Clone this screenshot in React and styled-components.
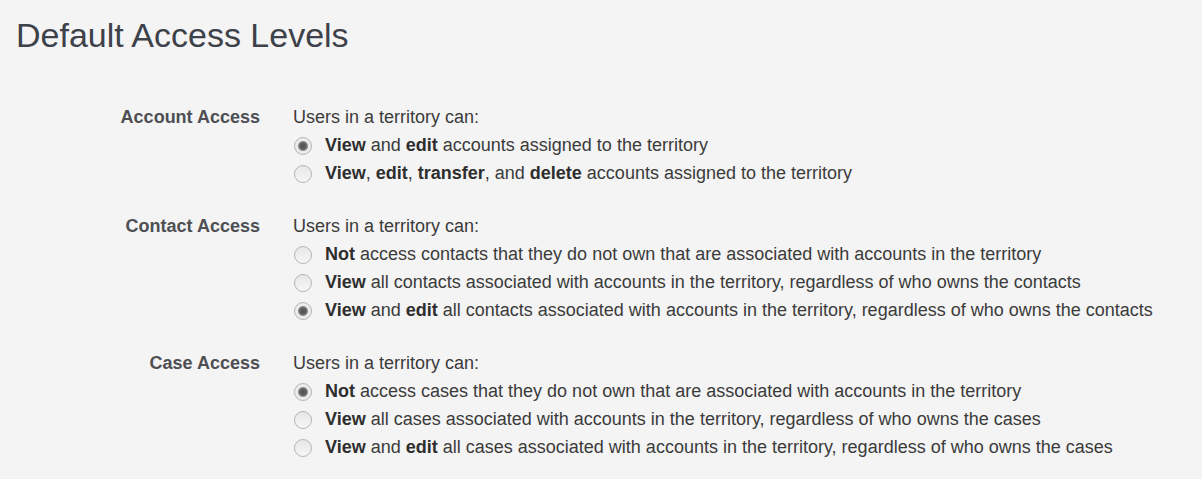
import React from "react";
import styled, { createGlobalStyle } from "styled-components";

const Global = createGlobalStyle`
  html, body { margin: 0; padding: 0; background: #f4f4f4; }
  body { font-family: "Liberation Sans", Arial, sans-serif; }
`;

const Page = styled.div`
  padding: 15px 0 0 16px;
  width: 1202px;
  height: 479px;
  box-sizing: border-box;
  background: #f4f4f4;
`;

const Title = styled.h1`
  margin: 0 0 48px 0;
  font-size: 34px;
  line-height: 40px;
  font-weight: normal;
  color: #3d4149;
`;

const Sections = styled.div`
  display: flex;
  flex-direction: column;
  gap: 24.5px;
`;

const Section = styled.div`
  display: grid;
  grid-template-columns: 244px 1fr;
  column-gap: 33px;
`;

const Label = styled.div`
  text-align: right;
  font-weight: bold;
  font-size: 18px;
  line-height: 28.5px;
  color: #4d4f53;
`;

const Options = styled.div`
  display: flex;
  flex-direction: column;
`;

const Intro = styled.div`
  font-size: 18px;
  line-height: 28.5px;
  color: #3b3b3b;
`;

const Option = styled.label`
  display: flex;
  align-items: center;
  height: 28px;
  font-size: 18px;
  color: #3b3b3b;
  b {
    font-weight: bold;
    color: #2e2e2e;
  }
`;

const Radio = styled.span`
  width: 16px;
  height: 16px;
  margin: 0 13px 0 1px;
  border-radius: 50%;
  border: 1px solid #b6b6b6;
  box-sizing: content-box;
  flex: none;
  background: ${(p) =>
    p.$checked
      ? "radial-gradient(circle at 50% 50%, #555 0, #5c5c5c 3px, #8c8c8c 4.5px, #ededed 5.5px, #e4e4e4 100%)"
      : "linear-gradient(#e7e7e7, #f6f6f6)"};
`;

const data = [
  {
    label: "Account Access",
    options: [
      { checked: true, parts: [["b", "View"], ["", " and "], ["b", "edit"], ["", " accounts assigned to the territory"]] },
      { checked: false, parts: [["b", "View"], ["", ", "], ["b", "edit"], ["", ", "], ["b", "transfer"], ["", ", and "], ["b", "delete"], ["", " accounts assigned to the territory"]] },
    ],
  },
  {
    label: "Contact Access",
    options: [
      { checked: false, parts: [["b", "Not"], ["", " access contacts that they do not own that are associated with accounts in the territory"]] },
      { checked: false, parts: [["b", "View"], ["", " all contacts associated with accounts in the territory, regardless of who owns the contacts"]] },
      { checked: true, parts: [["b", "View"], ["", " and "], ["b", "edit"], ["", " all contacts associated with accounts in the territory, regardless of who owns the contacts"]] },
    ],
  },
  {
    label: "Case Access",
    options: [
      { checked: true, parts: [["b", "Not"], ["", " access cases that they do not own that are associated with accounts in the territory"]] },
      { checked: false, parts: [["b", "View"], ["", " all cases associated with accounts in the territory, regardless of who owns the cases"]] },
      { checked: false, parts: [["b", "View"], ["", " and "], ["b", "edit"], ["", " all cases associated with accounts in the territory, regardless of who owns the cases"]] },
    ],
  },
];

export default function App() {
  return (
    <Page>
      <Global />
      <Title>Default Access Levels</Title>
      <Sections>
        {data.map((s) => (
          <Section key={s.label}>
            <Label>{s.label}</Label>
            <Options>
              <Intro>Users in a territory can:</Intro>
              {s.options.map((o, i) => (
                <Option key={i}>
                  <Radio $checked={o.checked} />
                  <span>
                    {o.parts.map(([t, txt], j) =>
                      t === "b" ? <b key={j}>{txt}</b> : <React.Fragment key={j}>{txt}</React.Fragment>
                    )}
                  </span>
                </Option>
              ))}
            </Options>
          </Section>
        ))}
      </Sections>
    </Page>
  );
}
